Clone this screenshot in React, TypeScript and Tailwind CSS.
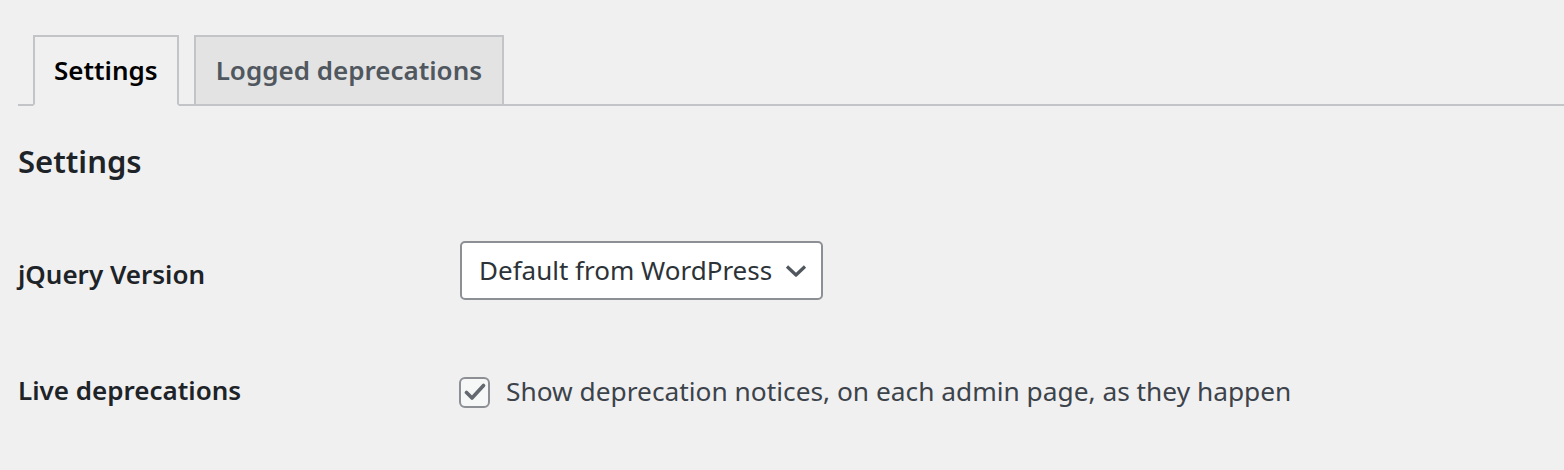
import React from "react";

export default function App() {
  return (
    <div
      className="min-h-[470px] w-full bg-[#f0f0f1] pl-[18px] pt-[35px] text-[#3c434a]"
      style={{ fontFamily: '"Noto Sans", "Open Sans", sans-serif' }}
    >
      <nav className="flex items-end border-b-2 border-[#c3c4c7]">
        <div className="-mb-[2px] ml-[15px] flex h-[71px] items-center border-2 border-b-2 border-[#c3c4c7] border-b-[#f0f0f1] bg-[#f0f0f1] px-[19px] text-[26px] font-semibold text-black">
          Settings
        </div>
        <div className="-mb-[2px] ml-[15px] flex h-[71px] items-center border-2 border-[#c3c4c7] bg-[#e3e3e4] px-[20px] text-[26px] font-semibold text-[#50575e]">
          Logged deprecations
        </div>
      </nav>

      <h2 className="mt-[35px] text-[31px] font-semibold leading-[40px] text-[#1d2327]">
        Settings
      </h2>

      <div className="mt-[60px] flex items-center">
        <div className="w-[442px] pt-[8px] text-[26px] font-semibold text-[#1d2327]">
          jQuery Version
        </div>
        <div className="flex h-[59px] w-[363px] items-center justify-between rounded-[5px] border-2 border-[#8c8f94] bg-white pl-[17px] pr-[14px] text-[26px] text-[#2c3338]">
          <span>Default from WordPress</span>
          <svg width="22" height="14" viewBox="0 0 22 14" fill="none">
            <path d="M2 2.5 L11 11 L20 2.5" stroke="#50575e" strokeWidth="3.2" strokeLinejoin="round" />
          </svg>
        </div>
      </div>

      <div className="mt-[71px] flex items-center">
        <div className="w-[441px] pb-[3px] text-[26px] font-semibold text-[#1d2327]">
          Live deprecations
        </div>
        <div className="flex items-center">
          <span className="flex h-[31px] w-[31px] items-center justify-center rounded-[6px] border-2 border-[#8c8f94] bg-[#f6f7f7]">
            <svg width="22" height="18" viewBox="0 0 22 18" fill="none">
              <path d="M2.5 9.5 L8 15 L19.5 2.5" stroke="#646970" strokeWidth="3.6" strokeLinecap="round" strokeLinejoin="round" />
            </svg>
          </span>
          <span className="ml-[16px] text-[26.3px] text-[#3c434a]">
            Show deprecation notices, on each admin page, as they happen
          </span>
        </div>
      </div>
    </div>
  );
}
